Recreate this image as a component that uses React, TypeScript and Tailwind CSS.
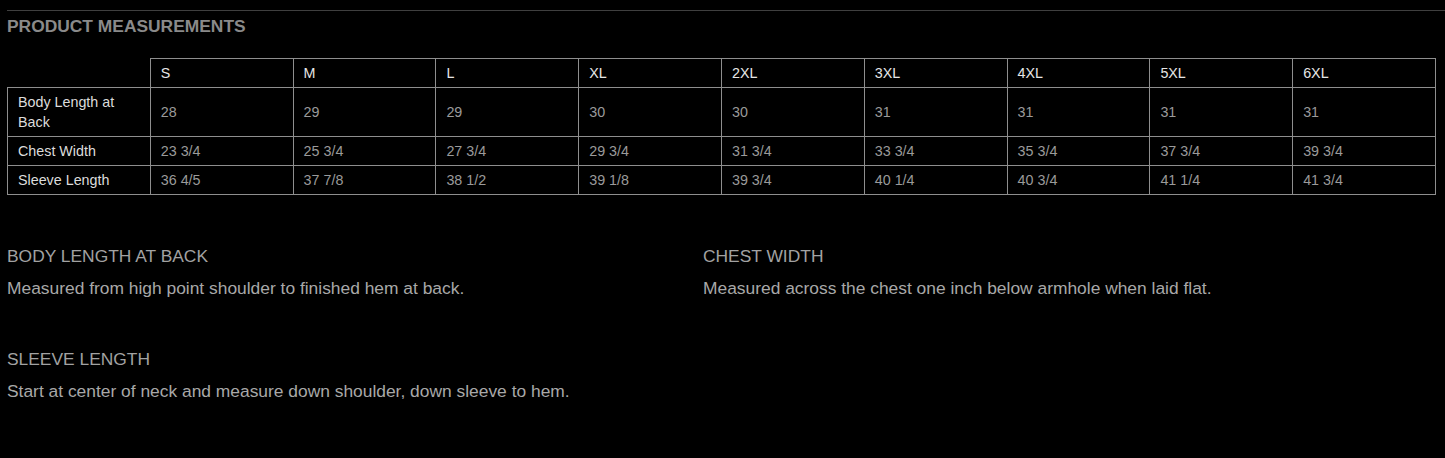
import React from "react";

const sizes = ["S", "M", "L", "XL", "2XL", "3XL", "4XL", "5XL", "6XL"];
const rows: { label: React.ReactNode; values: string[] }[] = [
  { label: "Body Length at Back", values: ["28", "29", "29", "30", "30", "31", "31", "31", "31"] },
  { label: "Chest Width", values: ["23 3/4", "25 3/4", "27 3/4", "29 3/4", "31 3/4", "33 3/4", "35 3/4", "37 3/4", "39 3/4"] },
  { label: "Sleeve Length", values: ["36 4/5", "37 7/8", "38 1/2", "39 1/8", "39 3/4", "40 1/4", "40 3/4", "41 1/4", "41 3/4"] },
];

export default function App() {
  return (
    <div
      className="min-h-[458px] w-[1445px] bg-black pl-[7px]"
      style={{ fontFamily: '"Liberation Sans", Arial, sans-serif' }}
    >
      <div className="pt-[10px]">
        <div className="h-px bg-[#3f3f3f]" />
      </div>
      <h1 className="mt-[5px] text-[17.4px] leading-[20px] font-bold text-[#8a8a8a]">
        PRODUCT MEASUREMENTS
      </h1>
      <table className="mt-[22px] w-[1429px] table-fixed border-collapse text-[14.3px] leading-[20px]">
        <thead>
          <tr className="h-[29px]">
            <th className="border-0 p-0" />
            {sizes.map((s) => (
              <th
                key={s}
                className="border border-[#8e8e8e] px-[10px] py-[4px] text-left align-middle font-normal text-[#e6e6e6]"
              >
                {s}
              </th>
            ))}
          </tr>
        </thead>
        <tbody>
          {rows.map((r, i) => (
            <tr key={i} className={i === 0 ? "h-[49px]" : i === 1 ? "h-[28px]" : "h-[29px]"}>
              <td className="border border-[#8e8e8e] px-[10px] py-[4px] align-middle text-[#dcdcdc]">
                {r.label}
              </td>
              {r.values.map((v, j) => (
                <td
                  key={j}
                  className="border border-[#8e8e8e] px-[10px] py-[4px] align-middle text-[#9a9a9a]"
                >
                  {v}
                </td>
              ))}
            </tr>
          ))}
        </tbody>
      </table>

      <div className="mt-[49px] grid grid-cols-[696px_1fr]">
        <div>
          <h2 className="text-[17.4px] leading-[24px] text-[#a2a2a2]">BODY LENGTH AT BACK</h2>
          <p className="mt-[8px] text-[17.4px] leading-[24px] text-[#a8a8a8]">
            Measured from high point shoulder to finished hem at back.
          </p>
        </div>
        <div>
          <h2 className="text-[17.4px] leading-[24px] text-[#a2a2a2]">CHEST WIDTH</h2>
          <p className="mt-[8px] text-[17.4px] leading-[24px] text-[#a8a8a8]">
            Measured across the chest one inch below armhole when laid flat.
          </p>
        </div>
        <div className="mt-[47px]">
          <h2 className="text-[17.4px] leading-[24px] text-[#a2a2a2]">SLEEVE LENGTH</h2>
          <p className="mt-[8px] text-[17.4px] leading-[24px] text-[#a8a8a8]">
            Start at center of neck and measure down shoulder, down sleeve to hem.
          </p>
        </div>
      </div>
    </div>
  );
}
